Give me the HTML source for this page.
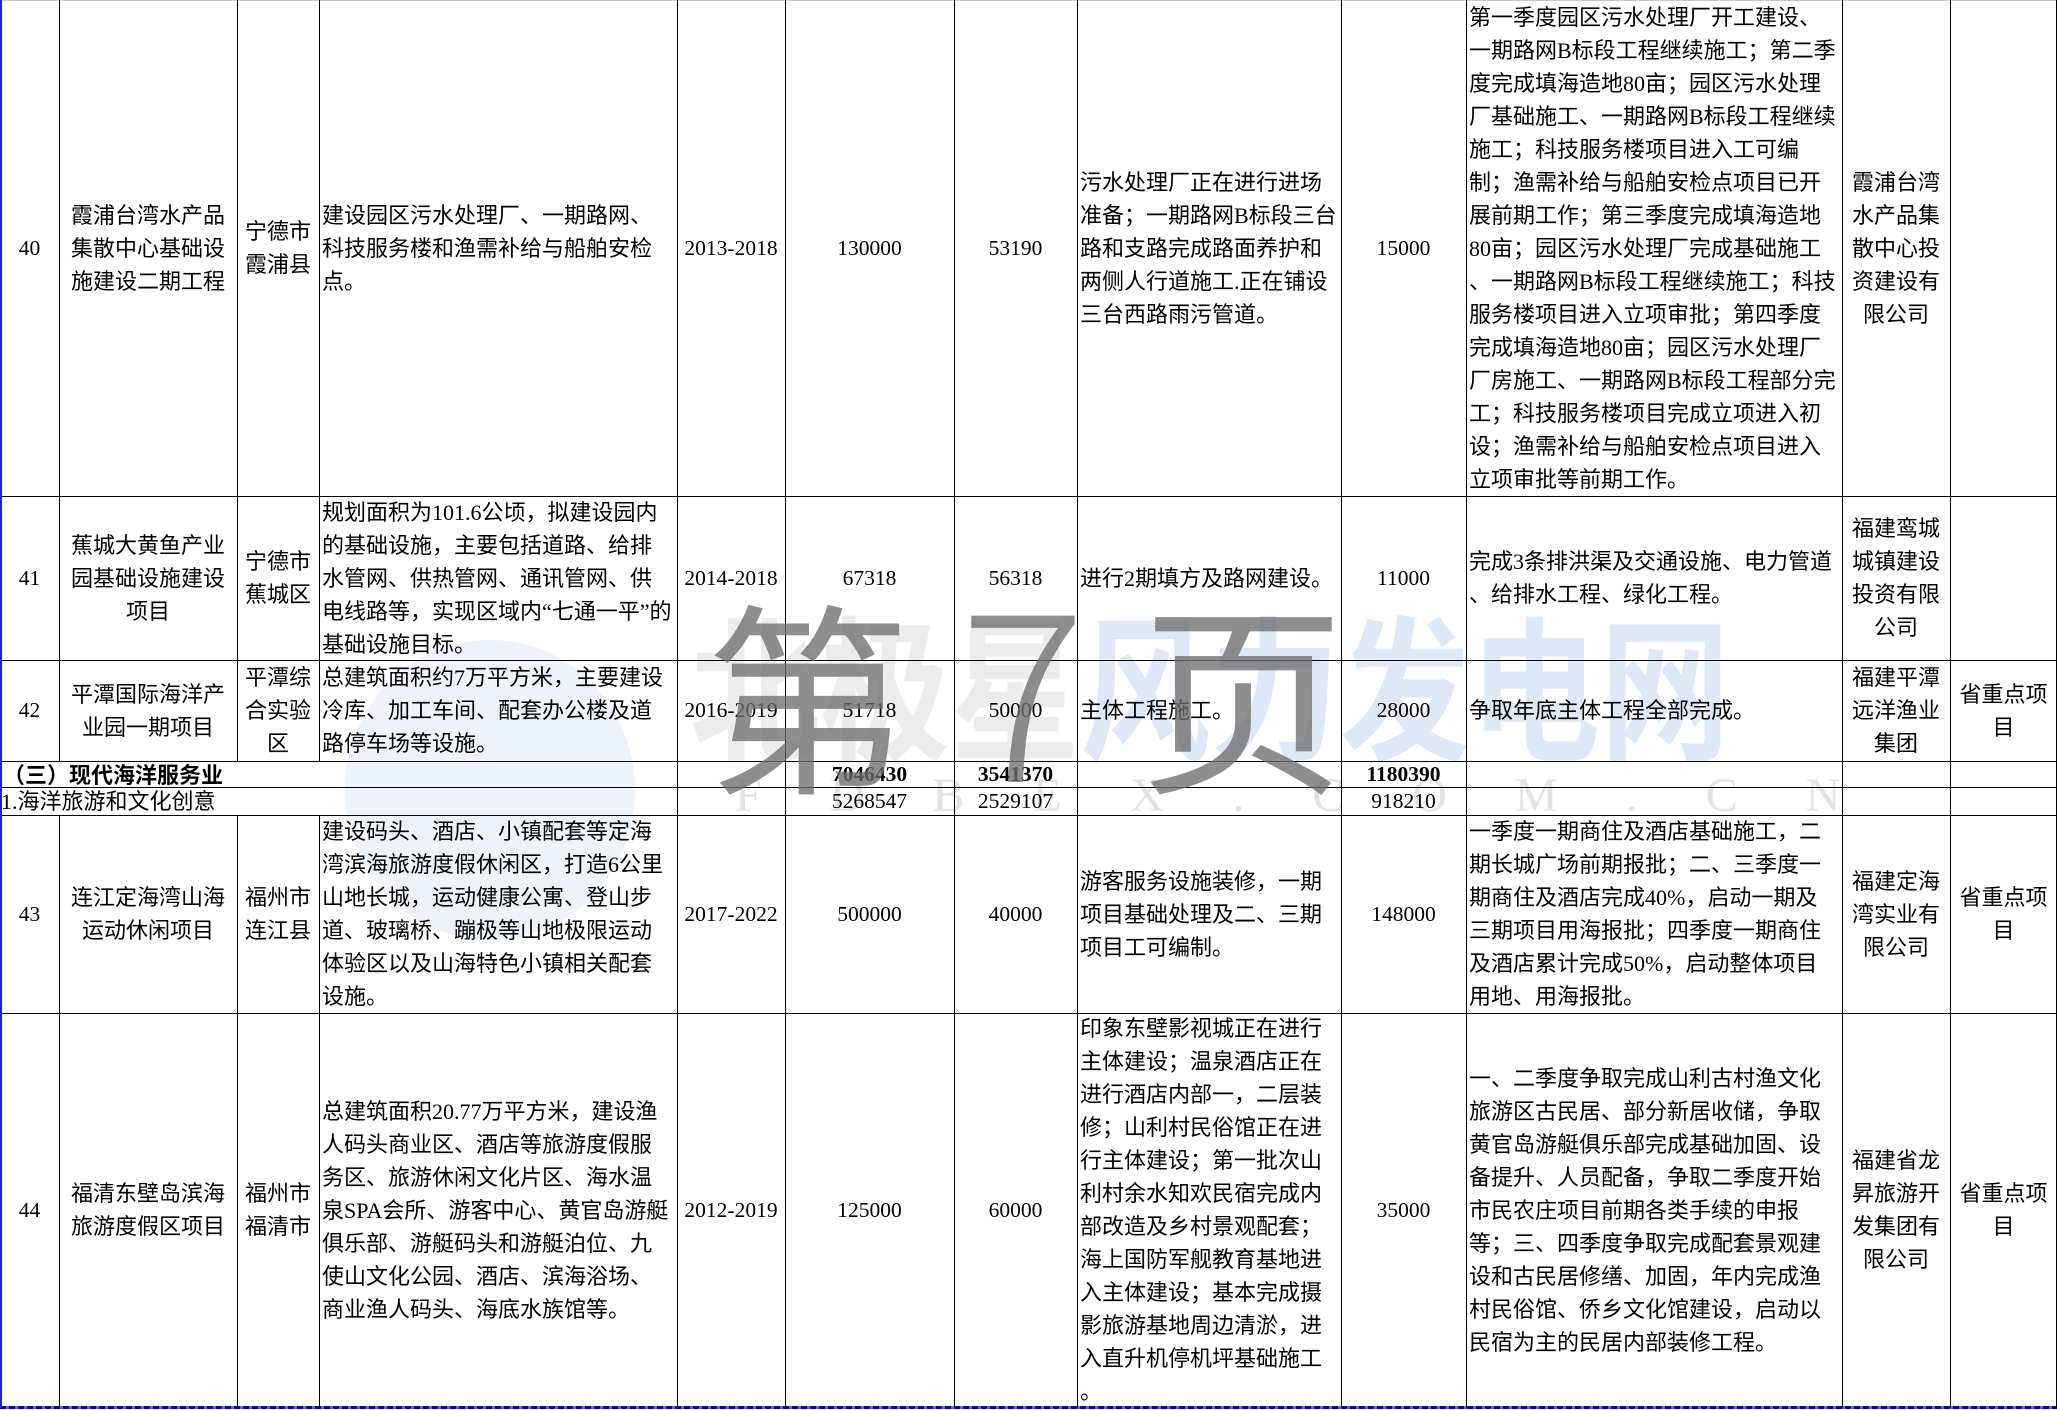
<!DOCTYPE html>
<html><head><meta charset="utf-8"><style>
body{margin:0;width:2057px;height:1410px;background:#fff;position:relative;overflow:hidden;font-family:"Liberation Serif","Noto Sans CJK SC",serif;color:#000}
.c{position:absolute;box-sizing:border-box;display:flex;align-items:center;font-size:22px;line-height:33px;white-space:nowrap;font-family:"Liberation Serif","Noto Sans CJK SC",serif}
.m{justify-content:center;text-align:center}
.l{justify-content:flex-start;text-align:left;padding-left:3px}
.n{font-size:21.5px}
.b{font-weight:bold}
.h{position:absolute;left:0;width:2057px;height:1px;background:#000}
.v{position:absolute;width:1px;background:#000}
.wm{position:absolute;white-space:nowrap;font-family:"Noto Sans CJK SC",sans-serif}
</style></head><body>
<div style="position:absolute;left:345px;top:640px;width:290px;height:300px;border-radius:50%;background:#e9f0f8;opacity:.8"></div>
<div class="wm" style="left:690px;top:585px;font-size:130px;line-height:160px;font-weight:bold;transform:scaleY(1.2);transform-origin:top left"><span style="color:#ececec">北极星</span><span style="color:#dde9f6">风力发电网</span></div>
<div class="wm" style="left:735px;top:768px;font-size:48px;color:#e3e3e3;letter-spacing:68px;font-family:'Liberation Serif',serif">FDBEX.COM.CN</div>

<div class="c m n" style="left:0;top:0;width:59px;height:496px">40</div>
<div class="c m" style="left:59px;top:0;width:178px;height:496px">霞浦台湾水产品<br>集散中心基础设<br>施建设二期工程</div>
<div class="c m" style="left:237px;top:0;width:82px;height:496px">宁德市<br>霞浦县</div>
<div class="c l" style="left:319px;top:0;width:358px;height:496px">建设园区污水处理厂、一期路网、<br>科技服务楼和渔需补给与船舶安检<br>点。</div>
<div class="c m n" style="left:677px;top:0;width:108px;height:496px">2013-2018</div>
<div class="c m n" style="left:785px;top:0;width:169px;height:496px">130000</div>
<div class="c m n" style="left:954px;top:0;width:123px;height:496px">53190</div>
<div class="c l" style="left:1077px;top:0;width:264px;height:496px">污水处理厂正在进行进场<br>准备；一期路网B标段三台<br>路和支路完成路面养护和<br>两侧人行道施工.正在铺设<br>三台西路雨污管道。</div>
<div class="c m n" style="left:1341px;top:0;width:125px;height:496px">15000</div>
<div class="c l" style="left:1466px;top:0;width:376px;height:496px">第一季度园区污水处理厂开工建设、<br>一期路网B标段工程继续施工；第二季<br>度完成填海造地80亩；园区污水处理<br>厂基础施工、一期路网B标段工程继续<br>施工；科技服务楼项目进入工可编<br>制；渔需补给与船舶安检点项目已开<br>展前期工作；第三季度完成填海造地<br>80亩；园区污水处理厂完成基础施工<br>、一期路网B标段工程继续施工；科技<br>服务楼项目进入立项审批；第四季度<br>完成填海造地80亩；园区污水处理厂<br>厂房施工、一期路网B标段工程部分完<br>工；科技服务楼项目完成立项进入初<br>设；渔需补给与船舶安检点项目进入<br>立项审批等前期工作。</div>
<div class="c m" style="left:1842px;top:0;width:108px;height:496px">霞浦台湾<br>水产品集<br>散中心投<br>资建设有<br>限公司</div>

<div class="c m n" style="left:0;top:496px;width:59px;height:164px">41</div>
<div class="c m" style="left:59px;top:496px;width:178px;height:164px">蕉城大黄鱼产业<br>园基础设施建设<br>项目</div>
<div class="c m" style="left:237px;top:496px;width:82px;height:164px">宁德市<br>蕉城区</div>
<div class="c l" style="left:319px;top:496px;width:358px;height:164px">规划面积为101.6公顷，拟建设园内<br>的基础设施，主要包括道路、给排<br>水管网、供热管网、通讯管网、供<br>电线路等，实现区域内“七通一平”的<br>基础设施目标。</div>
<div class="c m n" style="left:677px;top:496px;width:108px;height:164px">2014-2018</div>
<div class="c m n" style="left:785px;top:496px;width:169px;height:164px">67318</div>
<div class="c m n" style="left:954px;top:496px;width:123px;height:164px">56318</div>
<div class="c l" style="left:1077px;top:496px;width:264px;height:164px">进行2期填方及路网建设。</div>
<div class="c m n" style="left:1341px;top:496px;width:125px;height:164px">11000</div>
<div class="c l" style="left:1466px;top:496px;width:376px;height:164px">完成3条排洪渠及交通设施、电力管道<br>、给排水工程、绿化工程。</div>
<div class="c m" style="left:1842px;top:496px;width:108px;height:164px">福建鸾城<br>城镇建设<br>投资有限<br>公司</div>

<div class="c m n" style="left:0;top:660px;width:59px;height:101px">42</div>
<div class="c m" style="left:59px;top:660px;width:178px;height:101px">平潭国际海洋产<br>业园一期项目</div>
<div class="c m" style="left:237px;top:660px;width:82px;height:101px">平潭综<br>合实验<br>区</div>
<div class="c l" style="left:319px;top:660px;width:358px;height:101px">总建筑面积约7万平方米，主要建设<br>冷库、加工车间、配套办公楼及道<br>路停车场等设施。</div>
<div class="c m n" style="left:677px;top:660px;width:108px;height:101px">2016-2019</div>
<div class="c m n" style="left:785px;top:660px;width:169px;height:101px">51718</div>
<div class="c m n" style="left:954px;top:660px;width:123px;height:101px">50000</div>
<div class="c l" style="left:1077px;top:660px;width:264px;height:101px">主体工程施工。</div>
<div class="c m n" style="left:1341px;top:660px;width:125px;height:101px">28000</div>
<div class="c l" style="left:1466px;top:660px;width:376px;height:101px">争取年底主体工程全部完成。</div>
<div class="c m" style="left:1842px;top:660px;width:108px;height:101px">福建平潭<br>远洋渔业<br>集团</div>
<div class="c m" style="left:1950px;top:660px;width:107px;height:101px">省重点项<br>目</div>

<div class="c l b" style="left:0;top:761px;width:677px;height:26px;font-family:'Noto Sans CJK SC',sans-serif;font-size:22px">（三）现代海洋服务业</div>
<div class="c m n b" style="left:785px;top:761px;width:169px;height:26px">7046430</div>
<div class="c m n b" style="left:954px;top:761px;width:123px;height:26px">3541370</div>
<div class="c m n b" style="left:1341px;top:761px;width:125px;height:26px">1180390</div>
<div class="c l" style="left:0;top:787px;width:677px;height:28px;padding-left:1px">1.海洋旅游和文化创意</div>
<div class="c m n" style="left:785px;top:787px;width:169px;height:28px">5268547</div>
<div class="c m n" style="left:954px;top:787px;width:123px;height:28px">2529107</div>
<div class="c m n" style="left:1341px;top:787px;width:125px;height:28px">918210</div>

<div class="c m n" style="left:0;top:815px;width:59px;height:198px">43</div>
<div class="c m" style="left:59px;top:815px;width:178px;height:198px">连江定海湾山海<br>运动休闲项目</div>
<div class="c m" style="left:237px;top:815px;width:82px;height:198px">福州市<br>连江县</div>
<div class="c l" style="left:319px;top:815px;width:358px;height:198px">建设码头、酒店、小镇配套等定海<br>湾滨海旅游度假休闲区，打造6公里<br>山地长城，运动健康公寓、登山步<br>道、玻璃桥、蹦极等山地极限运动<br>体验区以及山海特色小镇相关配套<br>设施。</div>
<div class="c m n" style="left:677px;top:815px;width:108px;height:198px">2017-2022</div>
<div class="c m n" style="left:785px;top:815px;width:169px;height:198px">500000</div>
<div class="c m n" style="left:954px;top:815px;width:123px;height:198px">40000</div>
<div class="c l" style="left:1077px;top:815px;width:264px;height:198px">游客服务设施装修，一期<br>项目基础处理及二、三期<br>项目工可编制。</div>
<div class="c m n" style="left:1341px;top:815px;width:125px;height:198px">148000</div>
<div class="c l" style="left:1466px;top:815px;width:376px;height:198px">一季度一期商住及酒店基础施工，二<br>期长城广场前期报批；二、三季度一<br>期商住及酒店完成40%，启动一期及<br>三期项目用海报批；四季度一期商住<br>及酒店累计完成50%，启动整体项目<br>用地、用海报批。</div>
<div class="c m" style="left:1842px;top:815px;width:108px;height:198px">福建定海<br>湾实业有<br>限公司</div>
<div class="c m" style="left:1950px;top:815px;width:107px;height:198px">省重点项<br>目</div>

<div class="c m n" style="left:0;top:1013px;width:59px;height:394px">44</div>
<div class="c m" style="left:59px;top:1013px;width:178px;height:394px">福清东壁岛滨海<br>旅游度假区项目</div>
<div class="c m" style="left:237px;top:1013px;width:82px;height:394px">福州市<br>福清市</div>
<div class="c l" style="left:319px;top:1013px;width:358px;height:394px">总建筑面积20.77万平方米，建设渔<br>人码头商业区、酒店等旅游度假服<br>务区、旅游休闲文化片区、海水温<br>泉SPA会所、游客中心、黄官岛游艇<br>俱乐部、游艇码头和游艇泊位、九<br>使山文化公园、酒店、滨海浴场、<br>商业渔人码头、海底水族馆等。</div>
<div class="c m n" style="left:677px;top:1013px;width:108px;height:394px">2012-2019</div>
<div class="c m n" style="left:785px;top:1013px;width:169px;height:394px">125000</div>
<div class="c m n" style="left:954px;top:1013px;width:123px;height:394px">60000</div>
<div class="c l" style="left:1077px;top:1013px;width:264px;height:394px">印象东壁影视城正在进行<br>主体建设；温泉酒店正在<br>进行酒店内部一，二层装<br>修；山利村民俗馆正在进<br>行主体建设；第一批次山<br>利村余水知欢民宿完成内<br>部改造及乡村景观配套；<br>海上国防军舰教育基地进<br>入主体建设；基本完成摄<br>影旅游基地周边清淤，进<br>入直升机停机坪基础施工<br>。</div>
<div class="c m n" style="left:1341px;top:1013px;width:125px;height:394px">35000</div>
<div class="c l" style="left:1466px;top:1013px;width:376px;height:394px">一、二季度争取完成山利古村渔文化<br>旅游区古民居、部分新居收储，争取<br>黄官岛游艇俱乐部完成基础加固、设<br>备提升、人员配备，争取二季度开始<br>市民农庄项目前期各类手续的申报<br>等；三、四季度争取完成配套景观建<br>设和古民居修缮、加固，年内完成渔<br>村民俗馆、侨乡文化馆建设，启动以<br>民宿为主的民居内部装修工程。</div>
<div class="c m" style="left:1842px;top:1013px;width:108px;height:394px">福建省龙<br>昇旅游开<br>发集团有<br>限公司</div>
<div class="c m" style="left:1950px;top:1013px;width:107px;height:394px">省重点项<br>目</div>

<div class="h" style="top:0;background:#c8c8c8"></div>
<div class="h" style="top:496px"></div>
<div class="h" style="top:660px"></div>
<div class="h" style="top:761px"></div>
<div class="h" style="top:787px"></div>
<div class="h" style="top:815px"></div>
<div class="h" style="top:1013px"></div>
<div class="h" style="top:1406px;height:3px;background:repeating-linear-gradient(90deg,#00c 0 6px,#66f 6px 9px)"></div>

<div class="v" style="left:0;top:0;height:1408px;width:2px;background:#22c"></div>
<div class="v" style="left:2056px;top:0;height:1408px"></div>
<div class="v" style="left:59px;top:0;height:761px"></div><div class="v" style="left:59px;top:815px;height:593px"></div>
<div class="v" style="left:237px;top:0;height:761px"></div><div class="v" style="left:237px;top:815px;height:593px"></div>
<div class="v" style="left:319px;top:0;height:761px"></div><div class="v" style="left:319px;top:815px;height:593px"></div>
<div class="v" style="left:677px;top:0;height:1408px"></div>
<div class="v" style="left:785px;top:0;height:1408px"></div>
<div class="v" style="left:954px;top:0;height:1408px"></div>
<div class="v" style="left:1077px;top:0;height:1408px"></div>
<div class="v" style="left:1341px;top:0;height:1408px"></div>
<div class="v" style="left:1466px;top:0;height:1408px"></div>
<div class="v" style="left:1842px;top:0;height:1408px"></div>
<div class="v" style="left:1950px;top:0;height:1408px"></div>

<div class="wm" style="left:705px;top:575px;font-size:205px;line-height:230px;color:rgba(110,110,110,.78)">第</div>
<div class="wm" style="left:960px;top:555px;font-size:235px;line-height:250px;color:rgba(110,110,110,.78);font-weight:300">7</div>
<div class="wm" style="left:1140px;top:575px;font-size:205px;line-height:230px;color:rgba(110,110,110,.78)">页</div>
</body></html>
